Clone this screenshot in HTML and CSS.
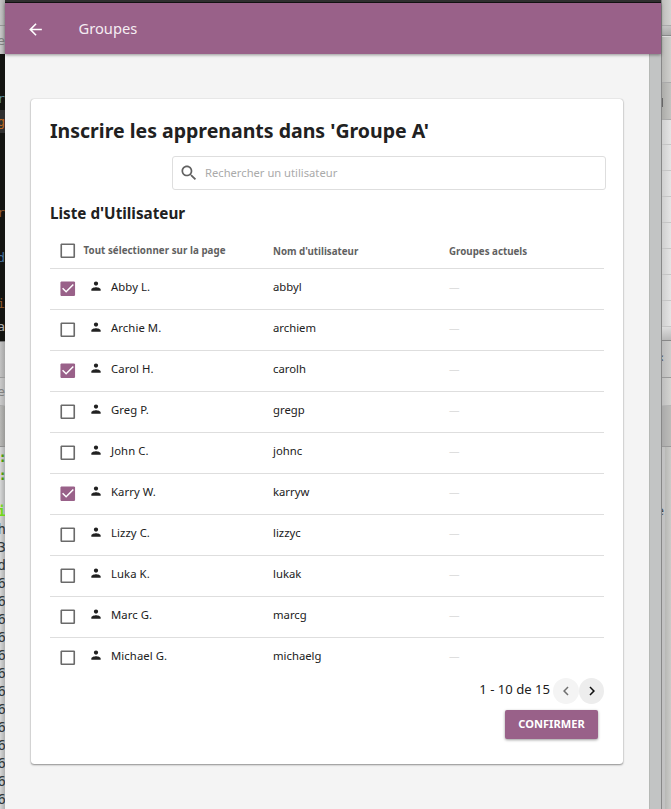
FILE: index.html
```html
<!DOCTYPE html>
<html lang="fr">
<head>
<meta charset="utf-8">
<title>Groupes</title>
<link rel="stylesheet" href="styles.css">
</head>
<body>
<svg class="defs" aria-hidden="true">
  <symbol id="box" viewBox="0 0 24 24"><path d="M19 5v14H5V5h14m1-2H4L3 4v16l1 1h16l1-1V4z"/></symbol>
  <symbol id="checked" viewBox="0 0 24 24"><path d="M20 3H4L3 4v16l1 1h16l1-1V4zM10 17l-5-5 1.300-1.300L10 14.400l8.200-8.200L19.500 7.500z"/></symbol>
  <symbol id="person" viewBox="0 0 24 24"><path d="M12 11.500a3.700 3.700 0 1 0 0-7.400a3.700 3.700 0 0 0 0 7.400zm0 2.500c-2.670 0-8 1.340-8 4v2h16v-2c0-2.660-5.330-4-8-4z"/></symbol>
</svg>
<div class="desktop">
  <div class="strip left">
    <div class="seg tabs"></div>
    <div class="seg address"><span>e</span></div>
    <div class="seg editor">
      <i class="gap35"></i><span class="cyan">r</span><span class="line orange">g</span><i class="gap69"></i>
      <span class="brown">r</span><i class="gap22"></i><span class="blue">d</span><i class="gap23"></i>
      <span class="brown">i</span><span class="pale">a</span>
    </div>
    <div class="seg title2"></div>
    <div class="seg menu2"><span>e</span></div>
    <div class="seg tool2"></div>
    <div class="seg term">
      <span class="green">:</span><span class="green">:</span><span></span><span class="lime">i</span><span>h</span><span>3</span><span>d</span><span>6</span><span>6</span><span>6</span><span>6</span><span>6</span><span>6</span><span>6</span><span>6</span><span>6</span><span>6</span><span>6</span><span>6</span><span>6</span>
    </div>
  </div>
  <div class="window">
    <div class="titlebar"></div>
    <header class="appbar">
      <svg class="back" viewBox="0 0 24 24"><path d="M20 11H7.830l5.590-5.590L12 4l-8 8 8 8 1.410-1.410L7.830 13H20v-2z"/></svg>
      <span class="apptitle">Groupes</span>
    </header>
    <div class="body">
      <main class="page">
        <section class="card">
          <h1>Inscrire les apprenants dans 'Groupe A'</h1>
          <div class="search">
            <svg viewBox="0 0 24 24"><path d="M15.500 14h-.79l-.28-.27C15.410 12.590 16 11.110 16 9.500 16 5.910 13.090 3 9.500 3S3 5.910 3 9.500 5.910 16 9.500 16c1.610 0 3.090-.59 4.230-1.570l.27.28v.79l5 4.990L20.490 19l-4.990-5zm-6 0C7.010 14 5 11.990 5 9.500S7.010 5 9.500 5 14 7.010 14 9.500 11.990 14 9.500 14z"/></svg>
            <span>Rechercher un utilisateur</span>
          </div>
          <h2>Liste d'Utilisateur</h2>
          <div class="table">
            <div class="row head"><svg class="check"><use href="#box"/></svg><span class="all">Tout sélectionner sur la page</span><span class="col">Nom d'utilisateur</span><span class="col">Groupes actuels</span></div>
            <div class="row"><svg class="check on"><use href="#checked"/></svg><svg class="person"><use href="#person"/></svg><span class="name">Abby L.</span><span class="user">abbyl</span><span class="dash">—</span></div>
            <div class="row"><svg class="check"><use href="#box"/></svg><svg class="person"><use href="#person"/></svg><span class="name">Archie M.</span><span class="user">archiem</span><span class="dash">—</span></div>
            <div class="row"><svg class="check on"><use href="#checked"/></svg><svg class="person"><use href="#person"/></svg><span class="name">Carol H.</span><span class="user">carolh</span><span class="dash">—</span></div>
            <div class="row"><svg class="check"><use href="#box"/></svg><svg class="person"><use href="#person"/></svg><span class="name">Greg P.</span><span class="user">gregp</span><span class="dash">—</span></div>
            <div class="row"><svg class="check"><use href="#box"/></svg><svg class="person"><use href="#person"/></svg><span class="name">John C.</span><span class="user">johnc</span><span class="dash">—</span></div>
            <div class="row"><svg class="check on"><use href="#checked"/></svg><svg class="person"><use href="#person"/></svg><span class="name">Karry W.</span><span class="user">karryw</span><span class="dash">—</span></div>
            <div class="row"><svg class="check"><use href="#box"/></svg><svg class="person"><use href="#person"/></svg><span class="name">Lizzy C.</span><span class="user">lizzyc</span><span class="dash">—</span></div>
            <div class="row"><svg class="check"><use href="#box"/></svg><svg class="person"><use href="#person"/></svg><span class="name">Luka K.</span><span class="user">lukak</span><span class="dash">—</span></div>
            <div class="row"><svg class="check"><use href="#box"/></svg><svg class="person"><use href="#person"/></svg><span class="name">Marc G.</span><span class="user">marcg</span><span class="dash">—</span></div>
            <div class="row"><svg class="check"><use href="#box"/></svg><svg class="person"><use href="#person"/></svg><span class="name">Michael G.</span><span class="user">michaelg</span><span class="dash">—</span></div>
          </div>
          <nav class="pager">
            <span>1 - 10 de 15</span>
            <button class="round off" aria-label="Précédent"><svg viewBox="0 0 24 24"><path d="M15.410 7.410L14 6l-6 6 6 6 1.410-1.410L10.830 12z"/></svg></button>
            <button class="round" aria-label="Suivant"><svg viewBox="0 0 24 24"><path d="M10 6L8.590 7.410 13.170 12l-4.580 4.590L10 18l6-6z"/></svg></button>
          </nav>
          <button class="confirm">CONFIRMER</button>
        </section>
      </main>
      <div class="scrollbar"></div>
    </div>
  </div>
  <div class="strip right">
    <div class="seg r1"></div>
    <div class="seg r2"></div>
    <div class="seg r3"></div>
    <div class="seg r4"><i></i></div>
    <div class="seg list"><i></i><i></i><i></i><i></i><i></i><i></i><i></i><i></i><i></i></div>
    <div class="seg r5"><span>×</span></div>
    <div class="seg r6"></div>
    <div class="seg r7"></div>
    <div class="seg r8"><span>e</span></div>
  </div>
</div>
</body>
</html>
```
FILE: styles.css
```css
* { box-sizing: border-box; }
body { margin: 0; font-family: "Noto Sans", sans-serif; color: #212121; background: #f4f4f4; }
.defs { display: none; }
.desktop { display: flex; width: 671px; height: 809px; overflow: hidden; }

.strip { display: flex; flex-direction: column; flex: none; overflow: hidden; }
.seg { flex: none; overflow: hidden; }
.seg span { display: flex; justify-content: flex-end; height: 18px; line-height: 18px; white-space: pre; }
.left { width: 5px; font-family: "DejaVu Sans Mono", monospace; font-size: 13px; }
.tabs { height: 26px; background: linear-gradient(90deg, #c4c4c4, #a9a9a9); border-bottom: 1px solid #969696; }
.address { height: 28px; padding-top: 6px; background: linear-gradient(90deg, #c8c8c8, #aaa); color: #808080; }
.editor { height: 287px; background: #131411; }
.editor i { display: block; }
.gap35 { height: 36px; }
.gap69 { height: 71px; }
.gap22 { height: 27px; }
.gap23 { height: 28px; }
.editor .line { height: 23px; line-height: 24px; margin-top: 2px; background: #303030; }
.editor .pale { margin-top: 5px; }
.cyan { color: #598c9d; }
.orange { color: #b9651f; }
.brown { color: #8e572c; }
.blue { color: #46719d; }
.pale { color: #aaa; }
.title2 { height: 37px; background: linear-gradient(90deg, #c2c2c2, #a5a5a5); border-top: 1px solid #777; border-bottom: 1px solid #999; }
.menu2 { height: 27px; padding-top: 5px; background: linear-gradient(90deg, #cacaca, #b0b0b0); color: #808080; }
.tool2 { height: 42px; background: linear-gradient(90deg, #b8b8b6, #999997); border-top: 1px solid #aaa; border-bottom: 1px solid #8e8e8e; }
.term { height: 362px; padding-top: 1px; background: linear-gradient(90deg, #d6d7d7, #aeafaf); color: #30373a; font-size: 14px; }
.term span { margin-right: -1px; }
.term .green { margin-right: -2px; }
.green { color: #4d9a0b; font-weight: bold; }
.lime { color: #72d719; font-weight: bold; }

.window { display: flex; flex-direction: column; width: 656px; flex: none; background: #f4f4f4; }
.titlebar { height: 3px; background: #303030; border-bottom: 1px solid #141414; }
.appbar { display: flex; align-items: center; height: 51px; padding-left: 21px; background: #996189; color: #f5edf3; z-index: 1; box-shadow: 0 1px 3px #0006; }
.back { width: 19px; height: 19px; fill: #fff; margin-top: 1px; }
.apptitle { margin: -1px 0 0 33.500px; font-size: 14.700px; line-height: 20px; }
.body { display: flex; flex: 1; }
.page { width: 644px; padding: 45px 26px 0; }
.scrollbar { width: 12px; background: #c2c4c4; border-left: 1px solid #b5b8b5; }

.card { display: flex; flex-direction: column; width: 592px; height: 665px; padding: 18px 18px 0 19px; background: #fff; border-radius: 3px; box-shadow: 0 1px 2px #0006, 0 0 1px #0005; }
h1 { margin: 0; font-size: 19.500px; line-height: 28px; font-weight: 700; }
.search { display: flex; align-items: center; align-self: flex-end; width: 434px; height: 34px; margin: 11px -1px 0 0; padding-left: 6px; border: 1px solid #dedede; border-radius: 3px; font-size: 11.200px; color: #aaa; }
.search span { margin-top: -1px; }
.search svg { width: 20px; height: 20px; margin: -1px 6px 0 0; fill: #616161; }
h2 { margin: 12px 0 0; font-size: 15.250px; line-height: 22px; font-weight: 700; }
.table { width: 554px; margin-top: 10px; }
.row { display: grid; grid-template-columns: 41px 20px 162px 176px 1fr; height: 41px; padding-top: 9px; border-bottom: 1px solid #dedede; font-size: 11.300px; line-height: 18px; }
.row:last-child { border-bottom: 0; }
.row .check { width: 19.500px; height: 19.500px; margin: 1px 0 0 7.750px; fill: #6a6a6a; }
.row .check.on { fill: #996189; }
.name { letter-spacing: .08px; }
.person { width: 14px; height: 14px; margin-top: 1px; margin-left: -2px; fill: #212121; }
.dash { color: #dedede; font-size: 10.500px; }
.row.head { grid-template-columns: 34px 189px 176px 1fr; height: 35px; padding-top: 6px; font-size: 9.750px; font-weight: 700; color: #616161; }
.row.head .check { margin-top: 1px; }
.head .all { line-height: 22px; margin-left: -.5px; letter-spacing: .05px; }
.head .col { padding-top: 3px; }
.pager { display: flex; align-items: center; justify-content: flex-end; height: 26px; margin: -1px 0 0; font-size: 13.100px; }
.pager > span { margin: -4px 3px 0 0; }
button { border: 0; font-family: inherit; }
.round { display: grid; place-items: center; width: 26px; height: 26px; padding: 0; border-radius: 50%; background: #ededed; }
.round:last-child { width: 25px; margin-right: 1px; }
.round svg { width: 18px; height: 18px; fill: #111; }
.round.off { background: #f4f4f4; }
.round.off svg { fill: #707070; }
.confirm { align-self: flex-end; width: 93px; height: 29px; margin: 6px 7px 0 0; padding: 0 0 2px; border-radius: 2px; background: #996189; color: #fff; font-size: 11.100px; font-weight: 700; box-shadow: 0 1px 3px #0006; }

.right { width: 10px; background: #c7c7c4; border-left: 1px solid #888; font-family: "DejaVu Sans Mono", monospace; font-size: 13px; }
.r1 { height: 26px; background: linear-gradient(90deg, #bebebb, #d3d3d1); border-bottom: 1px solid #aaa; }
.r2 { height: 10px; background: linear-gradient(#c5c5c4, #aaa); border-bottom: 1px solid #888; }
.r3 { height: 47px; background: linear-gradient(90deg, #b8b8b5, #d0d0cd); border-top: 1px solid #ddd; border-bottom: 1px solid #aaa; }
.r4 { height: 37px; padding-top: 15px; background: linear-gradient(90deg, #acaca9, #c4c4c1); border-bottom: 1px solid #aaa; }
.r4 i { display: block; width: 1px; height: 9px; background: #666; }
.list { height: 221px; background: linear-gradient(90deg, #cfcfcf, #e5e5e5); }
.list i { display: block; height: 26px; border-bottom: 1px solid #c5c5c5; }
.list i:first-child { height: 25px; }
.list i:last-child { height: 14px; border-bottom: 1px solid #888; background: linear-gradient(#ddd, #b8b8b8); }
.r5 { height: 37px; padding-top: 8px; background: linear-gradient(90deg, #bbb, #cececc); border-bottom: 1px solid #999; }
.right span { width: 2px; overflow: hidden; color: #444; }
.r6 { height: 28px; background: linear-gradient(90deg, #bebebe, #d4d4d1); border-bottom: 1px solid #b5b5b5; }
.r7 { height: 41px; background: linear-gradient(90deg, #aaa, #bcbcb9); border-bottom: 1px solid #999; }
.r8 { flex: 1; padding-top: 55px; background: linear-gradient(90deg, #c2c2c2 0 3px, #b7b8b5 3px, #cbcbc8); }
```
